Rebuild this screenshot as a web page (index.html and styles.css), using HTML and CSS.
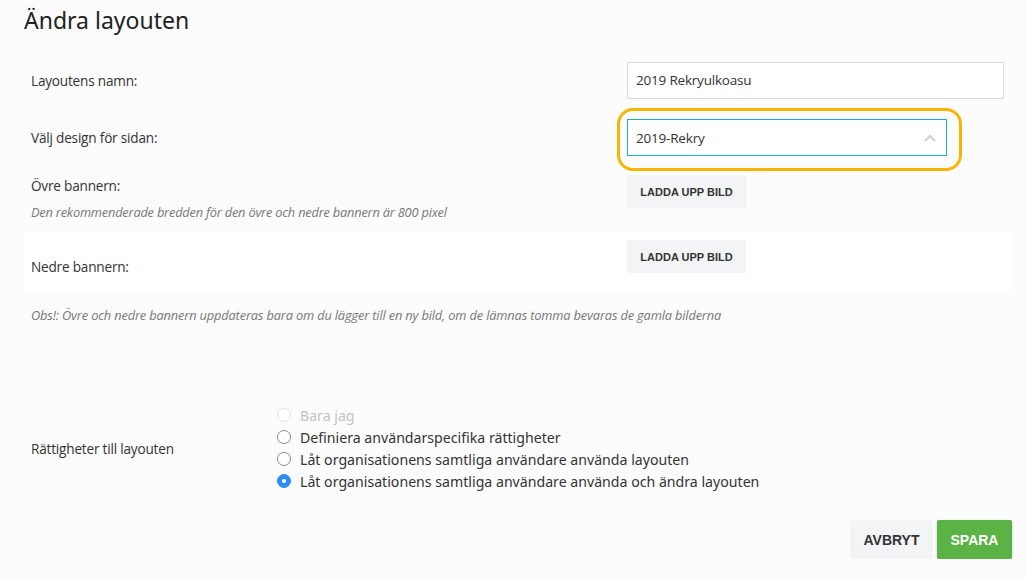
FILE: index.html
```html
<!DOCTYPE html>
<html lang="sv">
<head>
    <meta charset="UTF-8">
    <title>Ändra layouten</title>
    <link rel="stylesheet" href="styles.css">
</head>
<body>
    <div class="page">
        <h1 class="page-title">Ändra layouten</h1>

        <div class="form-row row-name">
            <label class="field-label">Layoutens namn:</label>
            <div class="field-control">
                <div class="text-input">2019 Rekryulkoasu</div>
            </div>
        </div>

        <div class="form-row row-design">
            <label class="field-label">Välj design för sidan:</label>
            <div class="field-control">
                <div class="select-wrap">
                    <div class="select-input">
                        <span>2019-Rekry</span>
                        <svg class="chevron" width="12" height="8" viewBox="0 0 12 8"><polyline points="1,7 6,2 11,7" fill="none" stroke="#cfcfcf" stroke-width="2"/></svg>
                    </div>
                    <div class="highlight-ring"></div>
                </div>
            </div>
        </div>

        <div class="form-row row-banner">
            <div class="field-label">
                <div>Övre bannern:</div>
                <div class="hint">Den rekommenderade bredden för den övre och nedre bannern är 800 pixel</div>
            </div>
            <div class="field-control">
                <button class="upload-btn">LADDA UPP BILD</button>
            </div>
        </div>

        <div class="form-row row-banner row-boxed">
            <div class="field-label label-low">Nedre bannern:</div>
            <div class="field-control">
                <button class="upload-btn">LADDA UPP BILD</button>
            </div>
        </div>

        <p class="note">Obs!: Övre och nedre bannern uppdateras bara om du lägger till en ny bild, om de lämnas tomma bevaras de gamla bilderna</p>

        <div class="rights-row">
            <div class="rights-label">Rättigheter till layouten</div>
            <div class="radio-list">
                <div class="radio-item disabled"><span class="radio"></span>Bara jag</div>
                <div class="radio-item"><span class="radio"></span>Definiera användarspecifika rättigheter</div>
                <div class="radio-item"><span class="radio"></span>Låt organisationens samtliga användare använda layouten</div>
                <div class="radio-item"><span class="radio checked"></span>Låt organisationens samtliga användare använda och ändra layouten</div>
            </div>
        </div>

        <div class="actions">
            <button class="btn btn-cancel">AVBRYT</button>
            <button class="btn btn-save">SPARA</button>
        </div>
    </div>
</body>
</html>
```

FILE: styles.css
```css
body {
    margin: 0;
    background-color: #fcfcfc;
    font-family: 'Open Sans', 'Noto Sans', sans-serif;
    color: #333;
}
.page {
    width: 988px;
    padding: 0 14px 0 24px;
}
.page-title {
    font-family: 'Noto Sans', sans-serif;
    font-weight: 400;
    font-size: 23px;
    color: #222;
    margin: 0;
    padding-top: 4px;
    height: 58px;
    line-height: 32px;
}
.form-row {
    display: flex;
    padding: 0 7px;
}
.field-label {
    width: 596px;
    font-size: 13.6px;
    color: #333;
    letter-spacing: -0.2px;
}
.field-control {
    flex: 1;
}
.row-name {
    height: 37px;
    align-items: center;
}
.text-input {
    width: 367px;
    height: 35px;
    line-height: 35px;
    padding-left: 8px;
    border: 1px solid #dcdcdc;
    background: #fff;
    font-size: 13.5px;
    letter-spacing: -0.2px;
}
.row-design {
    margin-top: 20px;
    height: 37px;
    align-items: center;
}
.select-wrap {
    position: relative;
    width: 320px;
}
.select-input {
    display: flex;
    justify-content: space-between;
    align-items: center;
    height: 35px;
    padding: 0 10px 0 8px;
    border: 1px solid #1cb0c9;
    background: #fff;
    font-size: 13.5px;
    letter-spacing: -0.2px;
}
.highlight-ring {
    position: absolute;
    left: -10px;
    top: -11px;
    right: -15px;
    bottom: -15px;
    border: 3px solid #f8b400;
    border-radius: 16px;
}
.row-banner {
    margin-top: 19px;
    height: 50px;
}
.row-banner .field-label {
    padding-top: 1px;
}
.hint {
    margin-top: 8px;
    font-size: 12.8px;
    font-style: italic;
    color: #777;
    letter-spacing: -0.2px;
}
.upload-btn {
    width: 119px;
    height: 33px;
    border: none;
    border-radius: 2px;
    background-color: #f3f4f6;
    font-family: 'Liberation Sans', sans-serif;
    font-weight: 700;
    font-size: 11px;
    color: #333;
    padding: 0;
}
.row-boxed {
    margin-top: 7px;
    height: 59px;
    padding-top: 8px;
    box-sizing: border-box;
    background-color: #fff;
}
.label-low {
    padding-top: 17px !important;
}
.note {
    margin: 15px 0 0 7px;
    font-size: 12.8px;
    font-style: italic;
    color: #777;
    letter-spacing: -0.15px;
}
.rights-row {
    display: flex;
    align-items: center;
    margin-top: 80px;
    padding-left: 7px;
}
.rights-label {
    width: 246px;
    font-size: 13.6px;
    letter-spacing: -0.2px;
}
.radio-list {
    display: flex;
    flex-direction: column;
}
.radio-item {
    display: flex;
    align-items: center;
    height: 22px;
    font-family: 'Noto Sans', sans-serif;
    font-size: 14.15px;
    color: #333;
}
.radio-item.disabled {
    color: #c2c2c2;
}
.radio {
    width: 12px;
    height: 12px;
    border: 1px solid #8a8a8a;
    border-radius: 50%;
    margin-right: 9px;
    background: #fff;
    position: relative;
}
.disabled .radio {
    border-color: #e2e2e2;
}
.radio.checked {
    background-color: #2f8cf4;
    border-color: #2f8cf4;
}
.radio.checked::after {
    content: '';
    position: absolute;
    left: 4px;
    top: 4px;
    width: 4px;
    height: 4px;
    border-radius: 50%;
    background: #fff;
}
.actions {
    display: flex;
    justify-content: flex-end;
    gap: 4px;
    margin-top: 28px;
    padding-right: 0;
}
.btn {
    height: 39px;
    border: none;
    border-radius: 2px;
    font-family: 'Liberation Sans', sans-serif;
    font-weight: 700;
    font-size: 14px;
    cursor: pointer;
}
.btn-cancel {
    width: 83px;
    background-color: #f3f4f6;
    color: #333;
}
.btn-save {
    width: 75px;
    background-color: #5bb245;
    color: #fff;
    box-shadow: 0 1px 3px rgba(0,0,0,0.2);
}
```
